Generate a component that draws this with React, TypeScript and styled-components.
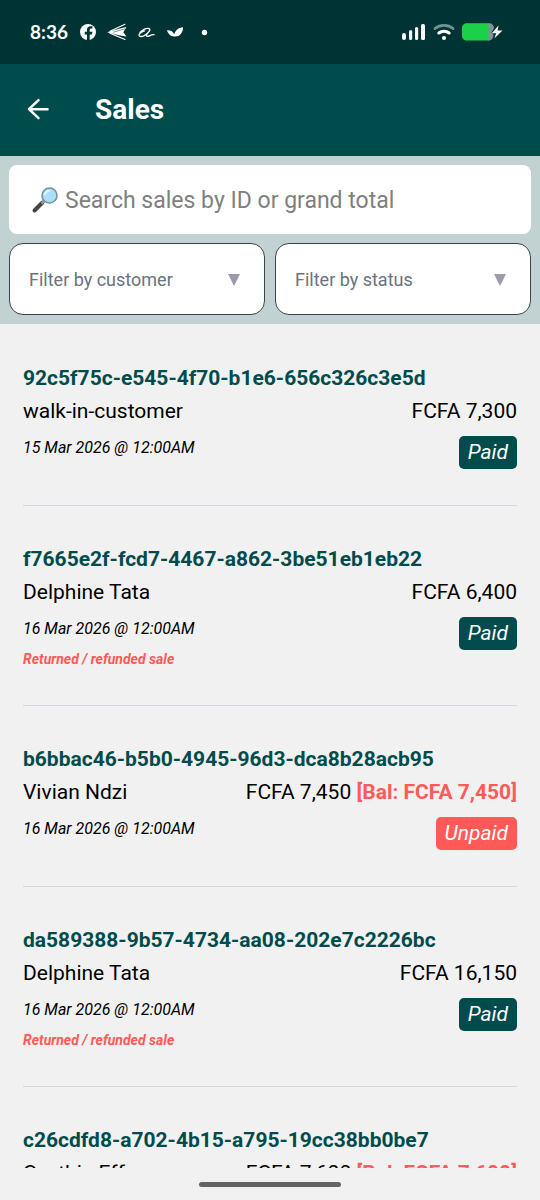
import React from 'react';
import styled, { createGlobalStyle } from 'styled-components';

const GlobalStyle = createGlobalStyle`
  *, *::before, *::after { box-sizing: border-box; }
  body { margin: 0; background: #f1f1f1; font-family: Roboto, "Noto Sans", sans-serif; }
  button, input, select { font: inherit; }
`;

const Screen = styled.div`
  display: flex;
  flex-direction: column;
  height: 100vh;
  background: #f1f1f1;
  color: #000;
`;

const StatusBar = styled.div`
  display: flex;
  align-items: center;
  justify-content: space-between;
  flex: none;
  height: 64px;
  padding: 0 37px 0 30px;
  background: #003434;
  color: #fff;
`;

const StatusGroup = styled.div<{ $gap: number }>`
  display: flex;
  align-items: center;
  gap: ${(p) => p.$gap}px;
  svg { display: block; }
`;

const Clock = styled.span`
  font-family: Lato, sans-serif;
  font-size: 19px;
  font-weight: 700;
  line-height: 24px;
`;

const AppBar = styled.header`
  display: flex;
  align-items: center;
  flex: none;
  gap: 43px;
  height: 92px;
  padding: 0 24px;
  background: #004c4c;
  color: #fff;
`;

const BackButton = styled.button`
  display: flex;
  padding: 0;
  border: 0;
  background: none;
  color: inherit;
  cursor: pointer;
`;

const Title = styled.h1`
  margin: 0;
  font-size: 28px;
  font-weight: 700;
  line-height: 36px;
`;

const Filters = styled.form`
  display: flex;
  flex-direction: column;
  flex: none;
  gap: 9px;
  padding: 9px;
  background: #c2d1d2;
`;

const SearchBox = styled.label`
  display: flex;
  align-items: center;
  gap: 6px;
  height: 69px;
  padding: 0 22px;
  border-radius: 8px;
  background: #fff;
  svg { flex: none; }
`;

const SearchInput = styled.input`
  flex: 1;
  min-width: 0;
  padding: 2px 0 0;
  border: 0;
  outline: 0;
  background: none;
  font-size: 23px;
  line-height: 32px;
  &::placeholder { color: #808080; opacity: 1; }
`;

const FilterRow = styled.div`
  display: flex;
  gap: 10px;
`;

const SelectBox = styled.div`
  display: grid;
  flex: 1;
  align-items: center;
  height: 72px;
  border: 1px solid #3a444b;
  border-radius: 14px;
  background: #fff;
  > * { grid-area: 1 / 1; }
  svg {
    justify-self: end;
    margin-right: 23px;
    pointer-events: none;
  }
`;

const Select = styled.select`
  width: 100%;
  height: 100%;
  padding: 0 44px 0 19px;
  border: 0;
  border-radius: 14px;
  appearance: none;
  background: none;
  color: #6b7280;
  font-size: 18px;
`;

const SaleList = styled.ul`
  flex: 1;
  min-height: 0;
  margin: 0;
  padding: 1px 23px 0;
  overflow: hidden;
  list-style: none;
`;

const SaleItem = styled.li`
  padding: 39px 0 36px;
  border-bottom: 1px solid #d3d4de;
`;

const SaleId = styled.h2`
  margin: 0 0 5px;
  color: #004c4c;
  font-size: 21px;
  font-weight: 700;
  line-height: 28px;
`;

const SaleRow = styled.div`
  display: flex;
  align-items: flex-start;
  justify-content: space-between;
  font-size: 21px;
  line-height: 28px;
  & + & { margin-top: 11px; }
`;

const Balance = styled.strong`
  color: #ff5a57;
  font-weight: 700;
`;

const SaleMeta = styled.div`
  display: flex;
  flex-direction: column;
  gap: 8px;
  font-style: italic;
`;

const SaleDate = styled.time`
  font-size: 16px;
  line-height: 24px;
`;

const RefundNote = styled.span`
  color: #ff5a57;
  font-size: 14px;
  font-weight: 700;
  line-height: 20px;
`;

const StatusBadge = styled.span<{ $paid: boolean }>`
  padding: 0 9px;
  border-radius: 5px;
  background: ${(p) => (p.$paid ? '#004c4c' : '#ff5a57')};
  color: #fff;
  font-size: 21px;
  font-style: italic;
  line-height: 33px;
`;

const GestureArea = styled.div`
  display: flex;
  align-items: center;
  justify-content: center;
  flex: none;
  height: 32px;
`;

const GestureHandle = styled.div`
  width: 142px;
  height: 5px;
  border-radius: 3px;
  background: #646464;
`;

type Sale = {
  id: string;
  customer: string;
  total: string;
  balance?: string;
  date: string;
  refunded?: boolean;
};

const sales: Sale[] = [
  { id: '92c5f75c-e545-4f70-b1e6-656c326c3e5d', customer: 'walk-in-customer', total: '7,300', date: '15 Mar 2026 @ 12:00AM' },
  { id: 'f7665e2f-fcd7-4467-a862-3be51eb1eb22', customer: 'Delphine Tata', total: '6,400', date: '16 Mar 2026 @ 12:00AM', refunded: true },
  { id: 'b6bbac46-b5b0-4945-96d3-dca8b28acb95', customer: 'Vivian Ndzi', total: '7,450', balance: '7,450', date: '16 Mar 2026 @ 12:00AM' },
  { id: 'da589388-9b57-4734-aa08-202e7c2226bc', customer: 'Delphine Tata', total: '16,150', date: '16 Mar 2026 @ 12:00AM', refunded: true },
  { id: 'c26cdfd8-a702-4b15-a795-19cc38bb0be7', customer: 'Cynthia Effa', total: '7,600', balance: '7,600', date: '16 Mar 2026 @ 12:00AM' },
];

const NotificationIcons = () => (
  <svg width="132" height="24" viewBox="0 0 132 24" aria-hidden="true">
    <circle cx="8" cy="12" r="8" fill="#fff" />
    <path d="M7 21v-6.500H4.800v-2.700H7V10C7 7.300 8.500 6.200 10.400 6.200h2v2.400h-1.200c-1 0-1.500.5-1.500 1.400v1.800h2.700l-.4 2.700H9.700V21z" fill="#003434" />
    <path d="M27 12.300 40 8.500 46.500 7l-3.200 5.300 3.200 4.200-6.500-1z" fill="#fff" />
    <path d="M30 11.300 45 4.300M30 13.200l15 6.300" fill="none" stroke="#fff" strokeWidth="1.100" strokeLinecap="round" />
    <path d="M33 12.300 45 8.800" fill="none" stroke="#003434" strokeWidth=".5" />
    <path d="M60 12.500c2-2.500 6-4.300 8.500-4 2.500.5 1 2.700-.5 4.200-2 2-4.500 3.800-7 3.800-4 0-1.500-4.500 3.500-5.700M68 12.700c-1.500 1.600-2.200 3.500-.5 3.700 2 .2 3.500-2.300 6.500-1.700" fill="none" stroke="#fff" strokeWidth="1.300" strokeLinecap="round" />
    <path d="M87 10.200c3.500-.2 6.300 1.300 7.300 4.300C95 10.500 98.500 7.600 103 7.300c.2 4-2.500 9.300-7.500 9.300-4.500 0-7.300-2.200-8.500-6.400z" fill="#fff" />
    <circle cx="124.500" cy="12.500" r="2.700" fill="#fff" />
  </svg>
);

const SignalIcon = () => (
  <svg width="24" height="18" viewBox="0 0 24 18" aria-hidden="true" fill="#fff">
    <rect x="0" y="10" width="4" height="7" rx="2" />
    <rect x="7" y="7" width="3.200" height="10" rx="1.600" />
    <rect x="13" y="4" width="3.200" height="13" rx="1.600" />
    <rect x="19" y="1" width="4" height="16" rx="1.500" />
  </svg>
);

const WifiIcon = () => (
  <svg width="22" height="18" viewBox="0 0 22 18" aria-hidden="true" fill="none" strokeLinecap="round">
    <path d="M2 5.500C7 1.300 15 1.300 20 5.500" stroke="#6f9292" strokeWidth="2.800" />
    <path d="M5.800 10c3-2.200 7.400-2.200 10.400 0" stroke="#fff" strokeWidth="3" />
    <circle cx="11" cy="15" r="2" fill="#fff" />
  </svg>
);

const BatteryIcon = () => (
  <svg width="41" height="18" viewBox="0 0 41 18" aria-hidden="true">
    <path d="M26 .2h1c3 0 5 2 5 5l-2.500 4.300L31.500 12c0 3-2 5.500-4.500 5.500h-1z" fill="#7d9292" />
    <path d="M5 .2h21.500v17.300H5c-3 0-5-2-5-5V5.200c0-3 2-5 5-5z" fill="#1bd147" />
    <path d="M36.500 2.500 29.800 10.200h4.400l-1.700 5L40.500 7.500h-4.900z" fill="#fff" />
  </svg>
);

const BackIcon = () => (
  <svg width="28" height="28" viewBox="0 0 28 28" fill="none" stroke="currentColor" strokeWidth="2.500" strokeLinecap="round" strokeLinejoin="round" aria-hidden="true">
    <path d="M14.500 4.200 5 13.200l9.500 9M5 13.200h18.500" />
  </svg>
);

const MagnifierIcon = () => (
  <svg width="28" height="28" viewBox="0 0 28 28" aria-hidden="true">
    <path d="m3.500 24.500 8-8" stroke="#454545" strokeWidth="4" strokeLinecap="round" />
    <path d="m10.500 17.500 3-3" stroke="#8b989d" strokeWidth="2.500" />
    <circle cx="18.500" cy="9.500" r="7.500" fill="#a9dff8" stroke="#78909c" strokeWidth="1.600" />
    <path d="M14 8.500c.7-2.500 2.500-3.700 4.500-3.700" fill="none" stroke="#e4f7ff" strokeWidth="1.800" strokeLinecap="round" />
  </svg>
);

const CaretIcon = () => (
  <svg width="14" height="14" viewBox="0 0 14 14" aria-hidden="true">
    <path d="M1 2h12L7 14z" fill="#9a9bab" />
  </svg>
);

const FilterSelect = ({ label }: { label: string }) => (
  <SelectBox>
    <Select aria-label={label} defaultValue="">
      <option value="">{label}</option>
    </Select>
    <CaretIcon />
  </SelectBox>
);

const SaleCard = ({ sale }: { sale: Sale }) => (
  <SaleItem>
    <SaleId>{sale.id}</SaleId>
    <SaleRow>
      <span>{sale.customer}</span>
      <span>
        FCFA {sale.total}
        {sale.balance && <Balance> [Bal: FCFA {sale.balance}]</Balance>}
      </span>
    </SaleRow>
    <SaleRow>
      <SaleMeta>
        <SaleDate>{sale.date}</SaleDate>
        {sale.refunded && <RefundNote>Returned / refunded sale</RefundNote>}
      </SaleMeta>
      <StatusBadge $paid={!sale.balance}>{sale.balance ? 'Unpaid' : 'Paid'}</StatusBadge>
    </SaleRow>
  </SaleItem>
);

export default function App() {
  return (
    <Screen>
      <GlobalStyle />
      <StatusBar>
        <StatusGroup $gap={12}>
          <Clock>8:36</Clock>
          <NotificationIcons />
        </StatusGroup>
        <StatusGroup $gap={7}>
          <SignalIcon />
          <WifiIcon />
          <BatteryIcon />
        </StatusGroup>
      </StatusBar>
      <AppBar>
        <BackButton type="button" aria-label="Back">
          <BackIcon />
        </BackButton>
        <Title>Sales</Title>
      </AppBar>
      <Filters>
        <SearchBox>
          <MagnifierIcon />
          <SearchInput type="text" aria-label="Search sales" placeholder="Search sales by ID or grand total" />
        </SearchBox>
        <FilterRow>
          <FilterSelect label="Filter by customer" />
          <FilterSelect label="Filter by status" />
        </FilterRow>
      </Filters>
      <SaleList>
        {sales.map((sale) => (
          <SaleCard key={sale.id} sale={sale} />
        ))}
      </SaleList>
      <GestureArea>
        <GestureHandle />
      </GestureArea>
    </Screen>
  );
}
